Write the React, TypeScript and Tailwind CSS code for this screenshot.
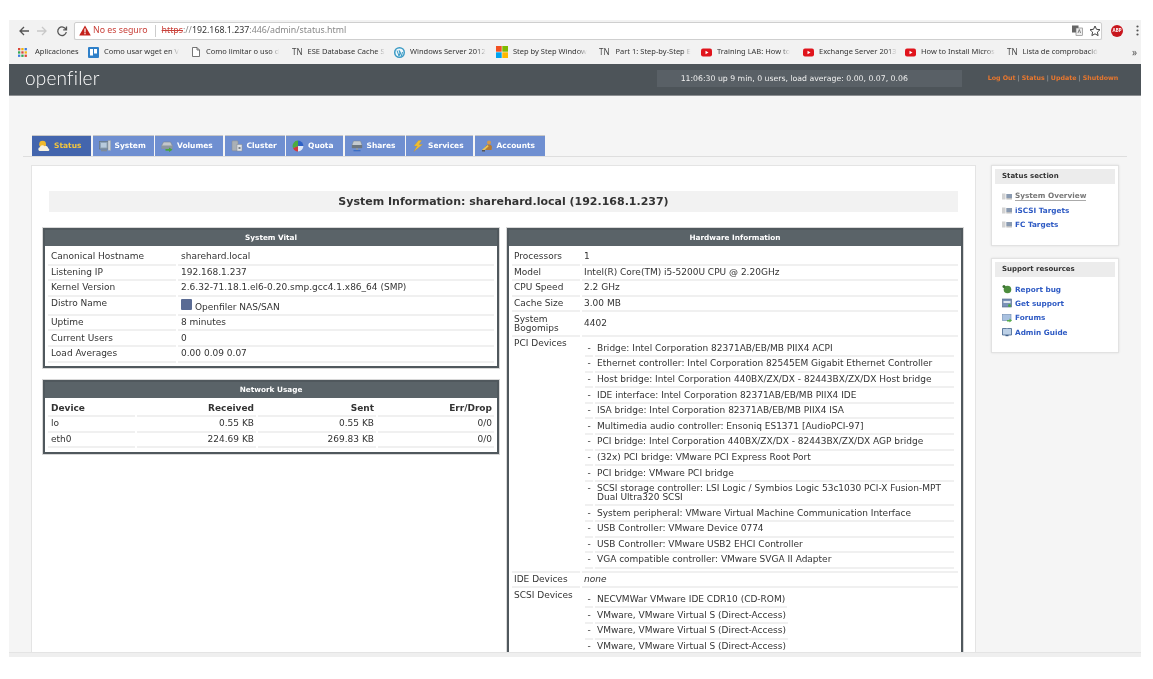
import React from "react";

const rowText = "text-[9px] leading-[9px] text-[#333]";

function Cell({ className = "", pad = "px-[2px]", children }: { className?: string; pad?: string; children: React.ReactNode }) {
  return <div className={"border-b-2 border-[#f0f0f0] py-[2.3px] " + pad + " " + className}>{children}</div>;
}

function Row({ label, children, labelW, tall, pad }: { label: React.ReactNode; children: React.ReactNode; labelW: string; tall?: boolean; pad?: string }) {
  return (
    <div className="flex gap-[2px]">
      <Cell pad={pad} className={labelW + " shrink-0"}>{label}</Cell>
      <Cell pad={pad} className={"flex-1 min-w-0 " + (tall ? "flex items-center" : "")}>{children}</Cell>
    </div>
  );
}

function Box({ title, children, className = "" }: { title: string; children: React.ReactNode; className?: string }) {
  return (
    <div className={"border-2 border-[#50585d] bg-white outline outline-1 outline-[#d8d8d8] " + className}>
      <div className="h-[16px] bg-[#5a6368] text-center text-[7.3px] font-bold leading-[16px] text-white">{title}</div>
      <div className={"px-[3px] pt-[4px] pb-[3px] " + rowText}>{children}</div>
    </div>
  );
}

function SubList({ items, className = "" }: { items: React.ReactNode[]; className?: string }) {
  return (
    <div className={"flex flex-col " + className}>
      {items.map((it, i) => (
        <div key={i} className="flex gap-[2px]">
          <div className="w-[8px] shrink-0 border-b-2 border-[#f0f0f0] py-[2.3px] text-center">-</div>
          <div className="flex-1 border-b-2 border-[#f0f0f0] py-[2.3px] px-[2px]">{it}</div>
        </div>
      ))}
    </div>
  );
}

const Svg = ({ children, w = 12, h = 12, vb = "0 0 12 12" }: { children: React.ReactNode; w?: number; h?: number; vb?: string }) => (
  <svg width={w} height={h} viewBox={vb} className="shrink-0">{children}</svg>
);

const IconSun = () => (
  <Svg>
    <circle cx="4.6" cy="4.2" r="3.4" fill="#f0b92c" />
    <path d="M1.500 11a2 2 0 0 1 .4-3.800 2.600 2.600 0 0 1 4.600-1 2.400 2.400 0 0 1 3.600 2 1.500 1.500 0 0 1 .4 2.800z" fill="#f6f1df" />
  </Svg>
);
const IconMonitor = () => (
  <Svg>
    <rect x="0.500" y="1.500" width="8.500" height="7.500" fill="#8ea3b8" stroke="#66757f" strokeWidth=".7" />
    <rect x="2" y="3" width="5.500" height="4.500" fill="#b7cbdc" />
    <rect x="9" y="0.500" width="2.700" height="10" fill="#cbd2d8" stroke="#8a949c" strokeWidth=".4" />
    <rect x="2" y="9.500" width="6" height="1.800" fill="#7f8b96" />
  </Svg>
);
const IconDrive = () => (
  <Svg>
    <path d="M2.500 2h7l1.800 3.500v3H.7v-3z" fill="#c2c7cc" stroke="#7b858d" strokeWidth=".6" />
    <rect x="1" y="5.500" width="10" height="3" fill="#8d969e" />
    <path d="M4.500 9h3.500V7.500l3.500 2.200L8 12v-1.300H4.500z" fill="#49a63b" />
  </Svg>
);
const IconCluster = () => (
  <Svg>
    <rect x="1" y="0.800" width="6" height="10" rx=".8" fill="#aab0b6" stroke="#868c92" strokeWidth=".5" />
    <rect x="6" y="4.500" width="5" height="6.500" fill="#dfe2e5" stroke="#868c92" strokeWidth=".5" />
    <rect x="7.500" y="7" width="2" height="2" fill="#7b8187" />
  </Svg>
);
const IconPie = () => (
  <Svg>
    <path d="M6 6V.6A5.400 5.400 0 0 1 11.400 6z" fill="#2f62c7" />
    <path d="M6 6h5.400A5.400 5.400 0 0 1 6 11.400z" fill="#dfe8f6" />
    <path d="M6 6v5.400A5.400 5.400 0 0 1 1 8z" fill="#d5383a" />
    <path d="M6 6 1 8A5.400 5.400 0 0 1 6 .6z" fill="#4cab40" />
  </Svg>
);
const IconShare = () => (
  <Svg>
    <path d="M2.500 1h7l1.500 4v3H1V5z" fill="#c5cacf" stroke="#79828a" strokeWidth=".5" />
    <rect x="1" y="5" width="10" height="3" fill="#6d767f" />
    <rect x="5" y="8" width="2" height="2" fill="#8a95a3" />
    <rect x="2.500" y="10" width="7" height="1.300" fill="#3d6fc4" />
  </Svg>
);
const IconBolt = () => (
  <Svg>
    <path d="M6.500.5 2 6h3.200L1.800 11.500 10.500 4.500H7L9.500.5z" fill="#efbd32" stroke="#c8951f" strokeWidth=".3" />
  </Svg>
);
const IconUser = () => (
  <Svg>
    <circle cx="8" cy="2.600" r="2" fill="#d59a4c" />
    <path d="M4.500 10V6.500a3.300 2.500 0 0 1 6.500 0l-.5 3.500z" fill="#b57a32" />
    <path d="M.8 10 6.500 5l1.200 1.300L2 11.500z" fill="#ecc44f" />
    <rect x="1" y="10" width="3" height="1.500" fill="#555" />
  </Svg>
);
const IconFolder = () => (
  <Svg w={10} h={7} vb="0 0 10 7">
    <rect x="0" y="0.500" width="3.500" height="6" fill="#d2d2d2" />
    <rect x="4.300" y="1" width="5.700" height="4" fill="#8a9ab0" />
    <rect x="4.300" y="5" width="5.700" height="1.500" fill="#c0c0c0" />
  </Svg>
);
const IconBug = () => (
  <Svg w={10} h={10} vb="0 0 10 10">
    <ellipse cx="5.500" cy="5.500" rx="3.800" ry="3.800" fill="#4d8d3d" />
    <circle cx="2" cy="2.500" r="1.500" fill="#3a7030" />
  </Svg>
);
const IconSupport = () => (
  <Svg w={10} h={10} vb="0 0 10 10">
    <rect x="0.500" y="1" width="9" height="8" fill="#7b93b8" stroke="#4a6084" strokeWidth=".6" />
    <rect x="1.500" y="3" width="7" height="2" fill="#dfe6ef" />
    <circle cx="7.500" cy="7.500" r="1.500" fill="#4fa544" />
  </Svg>
);
const IconForums = () => (
  <Svg w={10} h={10} vb="0 0 10 10">
    <rect x="0.500" y="1.500" width="8.500" height="6" fill="#a9c1e0" stroke="#6a88b0" strokeWidth=".6" />
    <path d="M5 7h2.500V5.500L10 7.500 7.500 9.500V8.500H5z" fill="#57ab4a" />
  </Svg>
);
const IconBook = () => (
  <Svg w={10} h={10} vb="0 0 10 10">
    <path d="M.5 1.500h4l.5.500.5-.500h4v6.500h-9z" fill="#bcd0e6" stroke="#3f5f88" strokeWidth=".8" />
    <rect x="3.500" y="8" width="3" height="1.200" fill="#3f5f88" />
  </Svg>
);

const tabs: { name: string; w: string; icon: React.ReactNode; active?: boolean }[] = [
  { name: "Status", w: "w-[59px]", icon: <IconSun />, active: true },
  { name: "System", w: "w-[61px]", icon: <IconMonitor /> },
  { name: "Volumes", w: "w-[68px]", icon: <IconDrive /> },
  { name: "Cluster", w: "w-[60px]", icon: <IconCluster /> },
  { name: "Quota", w: "w-[57px]", icon: <IconPie /> },
  { name: "Shares", w: "w-[60px]", icon: <IconShare /> },
  { name: "Services", w: "w-[67px]", icon: <IconBolt /> },
  { name: "Accounts", w: "w-[70px]", icon: <IconUser /> },
];

const Yt = () => (
  <svg width="11" height="9" viewBox="0 0 11 9" className="shrink-0">
    <rect width="11" height="8" y=".5" rx="2" fill="#e0141c" />
    <path d="M4.500 2.700v3.600L7.500 4.500z" fill="#fff" />
  </svg>
);
const Tn = () => <span className="shrink-0 text-[8px] text-[#444]">TN</span>;
const Apps = () => (
  <svg width="9" height="9" viewBox="0 0 9 9" className="shrink-0">
    {[0, 3.3, 6.600].map((y, r) =>
      [0, 3.3, 6.600].map((x, c) => (
        <rect key={r + "-" + c} x={x} y={y} width="2.300" height="2.300" fill={["#d9483b", "#f2b50f", "#3c7ee0", "#33a853", "#d9483b", "#f2b50f", "#3c7ee0", "#33a853", "#d9483b"][r * 3 + c]} />
      ))
    )}
  </svg>
);
const Trello = () => (
  <svg width="11" height="11" viewBox="0 0 11 11" className="shrink-0">
    <rect width="11" height="11" rx="1" fill="#2f80c9" />
    <rect x="2" y="2" width="3" height="6.500" fill="#fff" />
    <rect x="6" y="2" width="3" height="4.500" fill="#fff" />
  </svg>
);
const Doc = () => (
  <svg width="8" height="10" viewBox="0 0 8 10" className="shrink-0">
    <path d="M.5.5h4.500l2.500 2.500v6.500h-7z" fill="#fff" stroke="#555" strokeWidth=".8" />
    <path d="M5 .5V3h2.500" fill="none" stroke="#555" strokeWidth=".8" />
  </svg>
);
const Wp = () => (
  <svg width="11" height="11" viewBox="0 0 11 11" className="shrink-0">
    <circle cx="5.500" cy="5.500" r="5.500" fill="#3a9ac4" />
    <circle cx="5.500" cy="5.500" r="4" fill="#eef7fb" />
    <path d="M3 3.500 5 9l1-3-1-2.500M5.500 3.500l2 5.500 1-4" fill="none" stroke="#3a9ac4" strokeWidth="1" />
  </svg>
);
const Ms = () => (
  <svg width="12" height="12" viewBox="0 0 12 12" className="shrink-0">
    <rect width="5.700" height="5.700" fill="#f25022" />
    <rect x="6.300" width="5.700" height="5.700" fill="#7fba00" />
    <rect y="6.300" width="5.700" height="5.700" fill="#00a4ef" />
    <rect x="6.300" y="6.300" width="5.700" height="5.700" fill="#ffb900" />
  </svg>
);

const bookmarks: { w: string; gap: string; icon: React.ReactNode; text: string; fade?: boolean }[] = [
  { w: "w-[70px]", gap: "gap-[8px]", icon: <Apps />, text: "Aplicaciones" },
  { w: "w-[104px]", gap: "gap-[5px]", icon: <Trello />, text: "Como usar wget en V", fade: true },
  { w: "w-[100px]", gap: "gap-[6px]", icon: <Doc />, text: "Como limitar o uso d", fade: true },
  { w: "w-[102px]", gap: "gap-[5px]", icon: <Tn />, text: "ESE Database Cache S", fade: true },
  { w: "w-[102px]", gap: "gap-[5px]", icon: <Wp />, text: "Windows Server 2012", fade: true },
  { w: "w-[103px]", gap: "gap-[5px]", icon: <Ms />, text: "Step by Step Window", fade: true },
  { w: "w-[102px]", gap: "gap-[6px]", icon: <Tn />, text: "Part 1: Step-by-Step E", fade: true },
  { w: "w-[102px]", gap: "gap-[5px]", icon: <Yt />, text: "Training LAB: How to", fade: true },
  { w: "w-[102px]", gap: "gap-[5px]", icon: <Yt />, text: "Exchange Server 2013", fade: true },
  { w: "w-[102px]", gap: "gap-[5px]", icon: <Yt />, text: "How to Install Micros", fade: true },
  { w: "w-[100px]", gap: "gap-[5px]", icon: <Tn />, text: "Lista de comprobació", fade: true },
];

const vital: [string, React.ReactNode][] = [
  ["Canonical Hostname", "sharehard.local"],
  ["Listening IP", "192.168.1.237"],
  ["Kernel Version", "2.6.32-71.18.1.el6-0.20.smp.gcc4.1.x86_64 (SMP)"],
];
const vital2: [string, string][] = [
  ["Uptime", "8 minutes"],
  ["Current Users", "0"],
  ["Load Averages", "0.00 0.09 0.07"],
];
const hw: [React.ReactNode, string][] = [
  ["Processors", "1"],
  ["Model", "Intel(R) Core(TM) i5-5200U CPU @ 2.20GHz"],
  ["CPU Speed", "2.2 GHz"],
  ["Cache Size", "3.00 MB"],
];
const pci = [
  "Bridge: Intel Corporation 82371AB/EB/MB PIIX4 ACPI",
  "Ethernet controller: Intel Corporation 82545EM Gigabit Ethernet Controller",
  "Host bridge: Intel Corporation 440BX/ZX/DX - 82443BX/ZX/DX Host bridge",
  "IDE interface: Intel Corporation 82371AB/EB/MB PIIX4 IDE",
  "ISA bridge: Intel Corporation 82371AB/EB/MB PIIX4 ISA",
  "Multimedia audio controller: Ensoniq ES1371 [AudioPCI-97]",
  "PCI bridge: Intel Corporation 440BX/ZX/DX - 82443BX/ZX/DX AGP bridge",
  "(32x) PCI bridge: VMware PCI Express Root Port",
  "PCI bridge: VMware PCI bridge",
  "SCSI storage controller: LSI Logic / Symbios Logic 53c1030 PCI-X Fusion-MPT Dual Ultra320 SCSI",
  "System peripheral: VMware Virtual Machine Communication Interface",
  "USB Controller: VMware Device 0774",
  "USB Controller: VMware USB2 EHCI Controller",
  "VGA compatible controller: VMware SVGA II Adapter",
];
const scsi = [
  "NECVMWar VMware IDE CDR10 (CD-ROM)",
  "VMware, VMware Virtual S (Direct-Access)",
  "VMware, VMware Virtual S (Direct-Access)",
  "VMware, VMware Virtual S (Direct-Access)",
];

const net = [
  ["lo", "0.55 KB", "0.55 KB", "0/0"],
  ["eth0", "224.69 KB", "269.83 KB", "0/0"],
];

function SideCard({ title, items, className }: { title: string; items: { icon: React.ReactNode; label: string; muted?: boolean }[]; className: string }) {
  return (
    <div className={"border border-[#e2e2e2] bg-white p-[3px] shadow-[0_0_2px_#ddd] " + className}>
      <div className="h-[15px] bg-[#ececec] pl-[7px] text-[7px] font-bold leading-[15px] text-[#333]">{title}</div>
      <div className="mt-[7.500px] flex flex-col gap-[5px] pl-[6px]">
        {items.map((it) => (
          <div key={it.label} className="flex h-[9.300px] items-center gap-[2px]">
            <span className="flex w-[12px] shrink-0 justify-center">{it.icon}</span>
            <span className={"text-[7.300px] font-bold leading-[9px] " + (it.muted ? "border-b border-[#aaa] text-[#777]" : "text-[#2f5bc4]")}>{it.label}</span>
          </div>
        ))}
      </div>
    </div>
  );
}

export default function App() {
  return (
    <div className="h-[679px] w-[1153px] overflow-hidden bg-white pt-[20px] font-['DejaVu_Sans',sans-serif]">
      <div className="ml-[9px] flex h-[637px] w-[1132px] flex-col overflow-hidden bg-[#f5f5f5] blur-[0.3px]">
        {/* toolbar */}
        <div className="flex h-[20px] shrink-0 items-center bg-[#f2f2f2] pt-[1px] font-['Noto_Sans',sans-serif]">
          <div className="flex w-[65px] shrink-0 items-center pl-[9px]">
            <svg width="12" height="12" viewBox="0 0 12 12"><path d="M11 6H2M6 2 2 6l4 4" fill="none" stroke="#555" strokeWidth="1.300" /></svg>
            <svg width="12" height="12" viewBox="0 0 12 12" className="ml-[6px]"><path d="M1 6h9M6 2l4 4-4 4" fill="none" stroke="#c8c8c8" strokeWidth="1.300" /></svg>
            <svg width="12" height="12" viewBox="0 0 12 12" className="ml-[8px]"><path d="M10 4.500A4.300 4.300 0 1 0 10.300 7M10.500 1.500v3.300H7.200" fill="none" stroke="#555" strokeWidth="1.300" /></svg>
          </div>
          <div className="flex h-[18px] flex-1 items-center rounded-[2px] border border-[#cfcfcf] bg-white pl-[4px] text-[8.800px] shadow-[0_1px_1px_#ddd]">
            <svg width="12" height="11" viewBox="0 0 12 11" className="shrink-0"><path d="M6 .5 11.800 10.500H.2z" fill="#c5211a" /><rect x="5.400" y="3.500" width="1.200" height="4" fill="#fff" /><rect x="5.400" y="8" width="1.200" height="1.300" fill="#fff" /></svg>
            <span className="ml-[2px] text-[#c9413a]">No es seguro</span>
            <span className="ml-[7px] h-[12px] w-px bg-[#ccc]" />
            <span className="ml-[6px] text-[#c9413a] line-through">https</span>
            <span className="text-[#888]">://</span>
            <span className="text-[#333]">192.168.1.237</span>
            <span className="text-[#888]">:446/admin/status.html</span>
            <span className="ml-auto flex items-center gap-[6px] pr-[0px]">
              <svg width="11" height="11" viewBox="0 0 11 11"><rect x="0" y="0.500" width="6.500" height="7" fill="#666" /><rect x="4" y="3" width="6.500" height="7.500" fill="#eee" stroke="#777" strokeWidth=".6" /><path d="M6 8l1.300-3.500L8.600 8" fill="none" stroke="#555" strokeWidth=".7" /></svg>
              <svg width="12" height="12" viewBox="0 0 12 12"><path d="M6 1l1.500 3.300 3.500.4-2.600 2.400.7 3.500L6 8.800l-3.100 1.800.7-3.500L1 4.700l3.500-.4z" fill="none" stroke="#444" strokeWidth="1" /></svg>
            </span>
          </div>
          <div className="flex w-[39px] shrink-0 items-center pl-[9px]">
            <span className="flex h-[12px] w-[12px] items-center justify-center rounded-full bg-[#c8161d] text-[4.500px] font-bold text-white">ABP</span>
            <svg width="3" height="11" viewBox="0 0 3 11" className="ml-[13px]"><circle cx="1.500" cy="1.500" r="1.100" fill="#555" /><circle cx="1.500" cy="5.500" r="1.100" fill="#555" /><circle cx="1.500" cy="9.500" r="1.100" fill="#555" /></svg>
          </div>
        </div>
        {/* bookmarks */}
        <div className="flex h-[24px] shrink-0 items-center bg-[#f2f2f2] pl-[9px] font-['Noto_Sans',sans-serif] text-[7.500px] text-[#333]">
          {bookmarks.map((b) => (
            <div key={b.text} className={"flex shrink-0 items-center " + b.gap + " " + b.w}>
              {b.icon}
              <span className={"whitespace-nowrap " + (b.fade ? "[mask-image:linear-gradient(to_right,black_88%,transparent)]" : "")}>{b.text}</span>
            </div>
          ))}
          <span className="ml-auto pr-[4px] text-[10px] text-[#555]">»</span>
        </div>
        {/* header */}
        <div className="flex h-[32px] shrink-0 items-center border-b border-[#8c8f92] bg-[#4d5459] pb-[2px]">
          <span className="ml-[16px] font-['Lato',sans-serif] text-[19px] font-light tracking-[0.2px] text-white">openfiler</span>
          <div className="ml-[557px] flex h-[17px] w-[305px] items-center bg-[#596066] pl-[24px] text-[7.750px] text-[#f0f0f0]">11:06:30 up 9 min, 0 users, load average: 0.00, 0.07, 0.06</div>
          <div className="ml-[26px] flex -translate-y-[1px] text-[6.300px] font-bold text-[#e8772e]">
            <span>Log Out</span>
            <span className="mx-[2px] text-[#aaa] font-normal">|</span>
            <span>Status</span>
            <span className="mx-[2px] text-[#aaa] font-normal">|</span>
            <span>Update</span>
            <span className="mx-[2px] text-[#aaa] font-normal">|</span>
            <span>Shutdown</span>
          </div>
        </div>
        {/* page */}
        <div className="min-h-0 flex-1 overflow-hidden">
          <div className="mx-[14px] mt-[39px] flex h-[22px] gap-[1.500px] border-b border-[#dedede] pl-[9px]">
            {tabs.map((t) => (
              <div key={t.name} className={"flex h-[21px] items-center gap-[4px] border-t border-[#c8c8c8] pl-[6px] text-[7.500px] font-bold " + t.w + " " + (t.active ? "bg-[#4365ad] text-[#f4c63d]" : "bg-[#6f8fd1] text-white")}>
                {t.icon}
                <span>{t.name}</span>
              </div>
            ))}
          </div>
          <div className="ml-[22px] mt-[8px] flex items-start gap-[15px]">
            <div className="h-[520px] w-[945px] shrink-0 border border-[#e4e4e4] bg-white pt-[25px]">
              <div className="mx-[17px] h-[21px] bg-[#f2f2f2] text-center text-[11px] font-bold leading-[22px] text-[#333]">System Information: sharehard.local (192.168.1.237)</div>
              <div className="mt-[16px] flex items-start gap-[8px] pl-[11px]">
                <div className="flex w-[456px] shrink-0 flex-col gap-[12px]">
                  <Box title="System Vital">
                    {vital.map(([l, v]) => (
                      <Row key={l} label={l} labelW="w-[128px]" pad="px-[3px]">{v}</Row>
                    ))}
                    <div className="flex gap-[2px]">
                      <Cell pad="px-[3px]" className="h-[19px] w-[128px] shrink-0">Distro Name</Cell>
                      <Cell pad="px-[3px]" className="flex h-[19px] flex-1 items-start">
                        <span className="mr-[3px] h-[11px] w-[11px] rounded-[1px] bg-[#5a6b94]" />
                        <span className="mt-[4px]">Openfiler NAS/SAN</span>
                      </Cell>
                    </div>
                    {vital2.map(([l, v]) => (
                      <Row key={l} label={l} labelW="w-[128px]" pad="px-[3px]">{v}</Row>
                    ))}
                  </Box>
                  <Box title="Network Usage">
                    <div className="mb-[1px] grid grid-cols-[87px_119px_118px_1fr] gap-x-[2px]">
                      <Cell pad="pl-[3px] pr-[2px]" className="font-bold">Device</Cell>
                      <Cell className="text-right font-bold">Received</Cell>
                      <Cell className="text-right font-bold">Sent</Cell>
                      <Cell className="text-right font-bold">Err/Drop</Cell>
                      {net.map((r) =>
                        r.map((c, i) => (
                          <Cell key={r[0] + i} pad="pl-[3px] pr-[2px]" className={i ? "text-right" : ""}>{c}</Cell>
                        ))
                      )}
                    </div>
                  </Box>
                </div>
                <Box title="Hardware Information" className="w-[456px] shrink-0">
                  {hw.map(([l, v], i) => (
                    <Row key={i} label={l} labelW="w-[68px]">{v}</Row>
                  ))}
                  <Row label={<>System<br />Bogomips</>} labelW="w-[68px]" tall>4402</Row>
                  <div className="flex gap-[2px]">
                    <div className="w-[68px] shrink-0 border-b-2 border-[#f0f0f0] px-[2px] pt-[2.300px]">PCI Devices</div>
                    <div className="flex-1 border-b-2 border-[#f0f0f0] pb-[2px] pl-[3px] pr-[4px] pt-[4.500px]">
                      <SubList items={pci} />
                    </div>
                  </div>
                  <Row label="IDE Devices" labelW="w-[68px]"><i>none</i></Row>
                  <div className="flex gap-[2px]">
                    <div className="w-[68px] shrink-0 px-[2px] pt-[2.300px]">SCSI Devices</div>
                    <div className="flex-1 pl-[3px] pt-[4.500px]">
                      <SubList items={scsi} className="w-[201px] whitespace-nowrap" />
                    </div>
                  </div>
                </Box>
              </div>
            </div>
            <div className="flex w-[128px] shrink-0 flex-col gap-[12px]">
              <SideCard
                className="h-[81px]"
                title="Status section"
                items={[
                  { icon: <IconFolder />, label: "System Overview", muted: true },
                  { icon: <IconFolder />, label: "iSCSI Targets" },
                  { icon: <IconFolder />, label: "FC Targets" },
                ]}
              />
              <SideCard
                className="h-[95px]"
                title="Support resources"
                items={[
                  { icon: <IconBug />, label: "Report bug" },
                  { icon: <IconSupport />, label: "Get support" },
                  { icon: <IconForums />, label: "Forums" },
                  { icon: <IconBook />, label: "Admin Guide" },
                ]}
              />
            </div>
          </div>
        </div>
        <div className="h-[5px] shrink-0 border-t border-[#e4e4e4] bg-[#efefef]" />
      </div>
    </div>
  );
}
